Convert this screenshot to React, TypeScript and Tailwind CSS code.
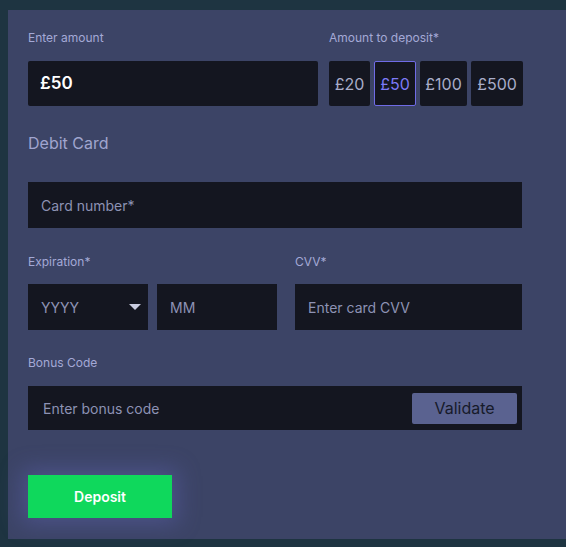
import React from 'react';

const font = { fontFamily: 'Inter, "Open Sans", sans-serif' };

const Label = ({ children, className = '' }: { children: React.ReactNode; className?: string }) => (
  <div className={`text-[12px] leading-[16px] text-[#a4a9d6] ${className}`}>{children}</div>
);

const amounts = [
  { label: '£20', w: 'w-[41px]' },
  { label: '£50', w: 'w-[42px]' },
  { label: '£100', w: 'w-[47px]' },
  { label: '£500', w: 'w-[52px]' },
];

export default function App() {
  return (
    <div className="min-h-[547px] w-[566px] bg-[#1e3441] pt-[10px] pl-[8px] pb-[8px] overflow-hidden" style={font}>
      <div className="h-[529px] bg-[#3c4466] pl-[20px] pt-[20px] pr-[44px]">
        {/* amount row */}
        <div className="flex gap-[11px]">
          <div className="w-[290px] shrink-0">
            <Label className="mb-[15px]">Enter amount</Label>
            <div className="h-[45px] rounded-[2px] bg-[#141620] flex items-center px-[12px] text-[17px] font-semibold text-white">
              £50
            </div>
          </div>
          <div className="shrink-0">
            <Label className="mb-[15px]">Amount to deposit*</Label>
            <div className="flex gap-[4px]">
              {amounts.map((a) => (
                <div
                  key={a.label}
                  className={`${a.w} h-[45px] shrink-0 rounded-[2px] bg-[#141620] flex items-center justify-center text-[16px] ${
                    a.label === '£50' ? 'border border-[#6f6be6] text-[#7d7af7]' : 'text-[#a9adc9]'
                  }`}
                >
                  {a.label}
                </div>
              ))}
            </div>
          </div>
        </div>

        <div className="mt-[27px] text-[16px] leading-[20px] text-[#a0a5cf]">Debit Card</div>

        <div className="mt-[29px] w-[494px] h-[46px] bg-[#141620] flex items-center px-[13px] text-[14px] text-[#8d92b4]">
          Card number*
        </div>

        <div className="mt-[26px] flex w-[494px]">
          <div className="w-[267px] shrink-0">
            <Label className="mb-[14px]">Expiration*</Label>
            <div className="flex gap-[9px]">
              <div className="w-[120px] h-[46px] bg-[#141620] flex items-center justify-between pl-[13px] pr-[7px] text-[14px] text-[#8d92b4]">
                <span>YYYY</span>
                <svg width="12" height="7" viewBox="0 0 12 7">
                  <path d="M0 0 L12 0 L6 6 Z" fill="#c9cce0" />
                </svg>
              </div>
              <div className="w-[120px] h-[46px] bg-[#141620] flex items-center px-[13px] text-[14px] text-[#8d92b4]">
                MM
              </div>
            </div>
          </div>
          <div className="flex-1">
            <Label className="mb-[14px]">CVV*</Label>
            <div className="h-[46px] bg-[#141620] flex items-center px-[13px] text-[14px] text-[#8d92b4]">
              Enter card CVV
            </div>
          </div>
        </div>

        <Label className="mt-[25px] mb-[15px]">Bonus Code</Label>
        <div className="w-[494px] h-[44px] bg-[#141620] flex items-center justify-between pl-[15px] pr-[5px] text-[14px] text-[#8d92b4]">
          <span>Enter bonus code</span>
          <div className="w-[105px] h-[31px] rounded-[2px] bg-[#5a6290] flex items-center justify-center text-[16px] text-[#161a2a]">
            Validate
          </div>
        </div>

        <button
          type="button"
          className="mt-[45px] w-[144px] h-[43px] bg-[#0fd85c] text-white text-[14px] font-semibold shadow-[0_0_22px_6px_rgba(95,100,180,0.45)]"
        >
          Deposit
        </button>
      </div>
    </div>
  );
}
